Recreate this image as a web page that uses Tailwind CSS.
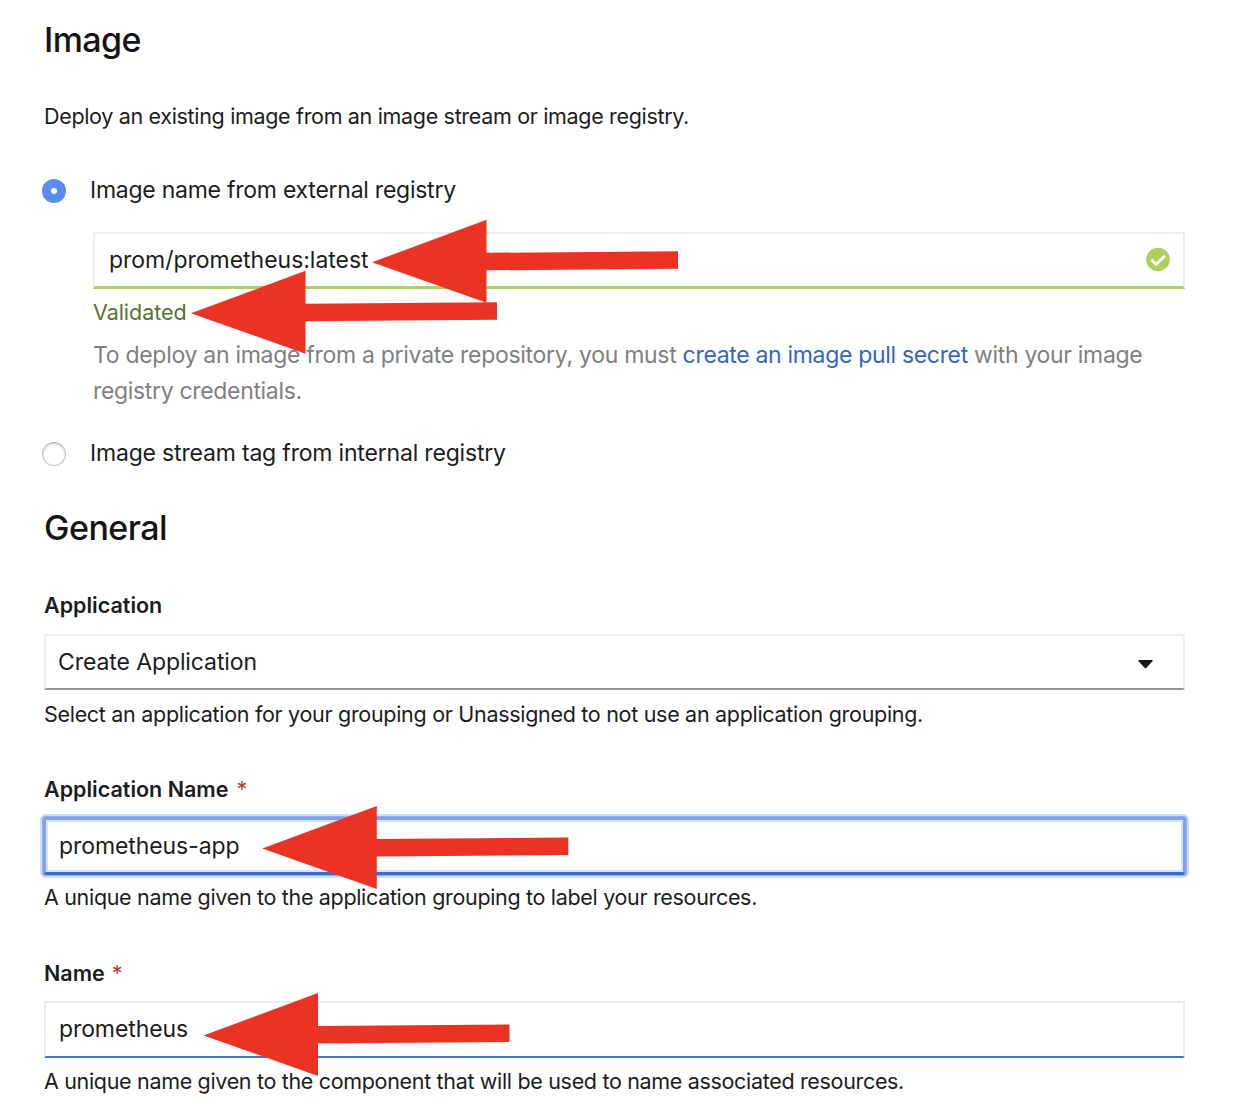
<!DOCTYPE html>
<html lang="en">
<head>
<meta charset="utf-8">
<title>Deploy Image</title>
<script src="https://cdn.jsdelivr.net/npm/@tailwindcss/browser@4"></script>
</head>
<body class="relative h-[1116px] w-[1242px] overflow-hidden bg-white pt-5 pl-11 pr-[57px] font-[Inter,sans-serif] text-[#1b1d21] whitespace-nowrap">
<form class="flex flex-col">
  <h2 class="h-10 text-[34px] leading-10 font-[550] tracking-[-0.6px] text-[#151515]">Image</h2>
  <p class="mt-10 text-[21.5px] leading-8 tracking-[-0.328px]">Deploy an existing image from an image stream or image registry.</p>

  <label class="mt-10 -ml-0.5 flex h-9 items-center text-[23px] leading-9 tracking-[-0.25px]">
    <span class="mt-0.5 mr-6 flex size-6 items-center justify-center rounded-full bg-[#5b8def]"><span class="size-[6px] rounded-full bg-white"></span></span>
    <span>Image name from external registry</span>
  </label>

  <div class="mt-6 ml-[49px] flex flex-col">
    <div class="flex h-[57px] items-center justify-between border-2 border-b-[3px] border-[#ededed] border-b-[#acd05c] pr-[13px] pl-[14px] text-[23px] tracking-[-0.02px]">
      <span>prom/prometheus:latest</span>
      <svg class="size-6" viewBox="0 0 24 24"><circle cx="12" cy="11.5" r="11.8" fill="#acd05c"/><path d="M5.4 11.8l4.7 4.7 8.8-8.8" fill="none" stroke="#fff" stroke-width="3"/></svg>
    </div>
    <p class="mt-[7px] h-8 text-[21.5px] leading-8 tracking-[-0.05px] text-[#5a7330]">Validated</p>
    <p class="mt-[9px] text-[23px] leading-9 text-[#808080]"><span class="tracking-[-0.29px]">To deploy an image from a private repository, you must </span><a class="tracking-[-0.32px] text-[#3465c0]">create an image pull secret</a><span class="tracking-[-0.32px]"> with your image</span><br><span class="tracking-[-0.33px]">registry credentials.</span></p>
  </div>

  <label class="mt-[26px] -ml-0.5 flex h-9 items-center text-[23px] leading-9 tracking-[-0.185px]">
    <span class="mt-0.5 mr-6 size-6 rounded-full border border-[#c4c4c4] border-t-[#b0b0b0] bg-white shadow-[inset_0_1px_2px_#c4c4c4]"></span>
    <span>Image stream tag from internal registry</span>
  </label>

  <h2 class="mt-[37px] h-10 text-[34px] leading-10 font-[550] tracking-[-0.5px] text-[#151515]">General</h2>

  <div class="mt-[41px] h-8 text-[21.5px] leading-8 font-semibold">Application</div>
  <div class="mt-[13px] flex h-14 items-center justify-between border-2 border-[#f0f0f0] border-b-[#97979b] pr-[30px] pl-3 text-[23px] tracking-[-0.096px]">
    <span>Create Application</span>
    <svg class="mt-1 h-[9px] w-[15px]" viewBox="0 0 15 9"><path d="M.8 0h13.4q.8.5.2 1.2L8.2 7.9q-.7.7-1.4 0L.6 1.2Q0 .5.8 0z" fill="#151515"/></svg>
  </div>
  <p class="mt-2 text-[21.5px] leading-8 tracking-[-0.299px]">Select an application for your grouping or Unassigned to not use an application grouping.</p>

  <div class="mt-[43px] flex h-8 text-[21.5px] leading-8 font-semibold"><span>Application Name</span><span class="ml-2 font-normal text-[#b0402c]">*</span></div>
  <div class="mt-3 -mr-px -ml-px flex h-[58px] items-center rounded-[3px] border-[3px] border-[#7ea2ee] border-b-[#386bd2] pl-[13px] text-[23px] tracking-[-0.08px] shadow-[0_0_0_1px_#8fb0f1,0_0_0_3px_#cddbf8,inset_0_0_0_2px_#d5e1f9]">prometheus-app</div>
  <p class="mt-[6px] text-[21.5px] leading-8 tracking-[-0.325px]">A unique name given to the application grouping to label your resources.</p>

  <div class="mt-11 flex h-8 text-[21.5px] leading-8 font-semibold"><span>Name</span><span class="ml-[7px] font-normal text-[#b0402c]">*</span></div>
  <div class="mt-3 flex h-[57px] items-center border-2 border-[#ededed] border-b-[#4773c6] pl-[13px] text-[23px] tracking-[-0.098px]">prometheus</div>
  <p class="mt-[7px] text-[21.5px] leading-8 tracking-[-0.327px]">A unique name given to the component that will be used to name associated resources.</p>
</form>

<!-- annotation arrows laid over the form -->
<svg class="pointer-events-none absolute top-0 left-0" width="1242" height="1116" viewBox="0 0 1242 1116" fill="#ea3323">
  <defs><path id="arrow" d="M0 0L114.5-42.5V-9.5L306-11V6.5L114.5 8V40.5z"/></defs>
  <use href="#arrow" x="372" y="262.3"/>
  <use href="#arrow" x="191" y="313.3"/>
  <use href="#arrow" x="262.3" y="848.5"/>
  <use href="#arrow" x="203.5" y="1035.5"/>
</svg>
</body>
</html>
